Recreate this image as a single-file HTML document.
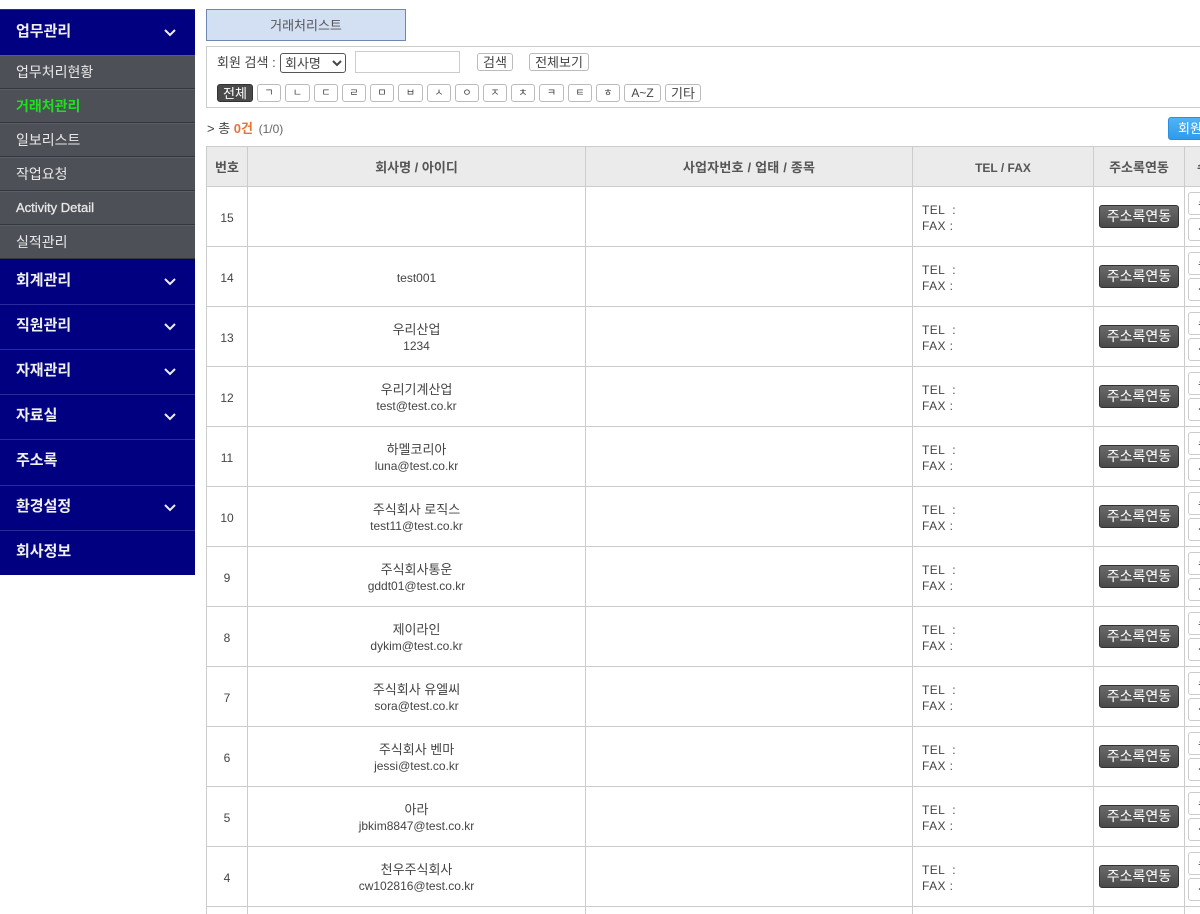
<!DOCTYPE html>
<html lang="ko"><head><meta charset="utf-8"><title>거래처리스트</title>
<style>
*{box-sizing:border-box}
html,body{margin:0;padding:0;width:1200px;height:914px;overflow:hidden;background:#fff}
body{position:relative;font-family:"Liberation Sans","Noto Sans CJK KR",sans-serif;font-size:13px;color:#444}
#side{position:absolute;left:0;top:9px;width:195px;height:566px;background:#000080}
#side div{position:absolute;left:0;width:195px;white-space:nowrap}
.m{color:#f0f0f0;font-size:15px;font-weight:bold;padding-left:16px;border-bottom:1px solid #2a2a9a}
.s{background:#4d5157;color:#e8e8e8;font-size:14px;padding-left:16px;height:34px;line-height:32px;border-bottom:1px solid #33363b;border-top:1px solid #5a5e64}
#side svg{position:absolute;left:163px}
.tab{position:absolute;left:206px;top:9px;width:200px;height:32px;background:#d3dff3;border:1px solid #6f86b0;text-align:center;line-height:31px;color:#555;font-size:13px}
.box{position:absolute;left:206px;top:46px;width:1000px;height:62px;border:1px solid #ccc;border-right:0}
.abs{position:absolute;white-space:nowrap}
.b{position:absolute;top:84px;height:18px;border:1px solid #bbb;border-radius:3px;background:#fff;color:#444;text-align:center;line-height:18px;font-size:13px;white-space:nowrap;overflow:hidden}
.k{font-size:10px}
table{position:absolute;left:206px;top:146px;width:1060px;border-collapse:collapse;table-layout:fixed}
th,td{border:1px solid #ccc;text-align:center;padding:2px 0 0;font-size:12px;line-height:16px;color:#444;overflow:hidden;white-space:nowrap}
th{height:40px;background:#ebebeb;font-weight:bold;color:#555;font-size:13px}
td{height:60px;position:relative}
td i{font-style:normal;font-size:13px}
td.f{text-align:left;padding-left:9px;letter-spacing:.4px}
.g{display:block;width:80px;height:23px;margin:-2px auto 0;line-height:21px;background:linear-gradient(#6a6a6a,#4a4a4a);border:1px solid #333;border-radius:3px;color:#fff;font-size:14px}
.e{position:absolute;left:3px;width:40px;height:23px;border:1px solid #ccc;border-radius:3px;background:#fff;text-align:left;padding-left:9px;line-height:21px;font-size:13px}
.e.a{top:5px}.e.c{top:31px}
</style></head><body>
<div id="side">
<div class="m" style="top:0;height:46px;line-height:44px;border:0;border-top:1px solid #2a2a9a">업무관리</div>
<svg style="top:19px" width="14" height="10" viewBox="0 0 14 10"><path d="M2 2l5 5 5-5" fill="none" stroke="#eee" stroke-width="2"/></svg>
<div class="s" style="top:46px">업무처리현황</div>
<div class="s" style="top:80px;color:#1fe01f;font-weight:bold">거래처관리</div>
<div class="s" style="top:114px">일보리스트</div>
<div class="s" style="top:148px">작업요청</div>
<div class="s" style="top:182px;font-size:13px;line-height:31px;-webkit-text-stroke:.3px #e8e8e8">Activity Detail</div>
<div class="s" style="top:216px">실적관리</div>
<div class="m" style="top:250px;height:46px;line-height:43px">회계관리</div>
<svg style="top:268px" width="14" height="10" viewBox="0 0 14 10"><path d="M2 2l5 5 5-5" fill="none" stroke="#eee" stroke-width="2"/></svg>
<div class="m" style="top:296px;height:45px;line-height:41px">직원관리</div>
<svg style="top:313px" width="14" height="10" viewBox="0 0 14 10"><path d="M2 2l5 5 5-5" fill="none" stroke="#eee" stroke-width="2"/></svg>
<div class="m" style="top:341px;height:45px;line-height:41px">자재관리</div>
<svg style="top:358px" width="14" height="10" viewBox="0 0 14 10"><path d="M2 2l5 5 5-5" fill="none" stroke="#eee" stroke-width="2"/></svg>
<div class="m" style="top:386px;height:45px;line-height:41px">자료실</div>
<svg style="top:403px" width="14" height="10" viewBox="0 0 14 10"><path d="M2 2l5 5 5-5" fill="none" stroke="#eee" stroke-width="2"/></svg>
<div class="m" style="top:431px;height:46px;line-height:42px">주소록</div>
<div class="m" style="top:477px;height:45px;line-height:41px">환경설정</div>
<svg style="top:494px" width="14" height="10" viewBox="0 0 14 10"><path d="M2 2l5 5 5-5" fill="none" stroke="#eee" stroke-width="2"/></svg>
<div class="m" style="top:522px;height:44px;line-height:41px;border:0">회사정보</div>
</div>

<div class="tab">거래처리스트</div>
<div class="box"></div>
<div class="abs" style="left:217px;top:55px;line-height:16px">회원 검색 :</div>
<select style="position:absolute;left:280px;top:53px;width:66px;height:20px;border:1px solid #555;border-radius:3px;background:#fff;font:13px 'Liberation Sans','Noto Sans CJK KR',sans-serif;color:#444;padding:0"><option>회사명</option></select>
<div class="abs" style="left:355px;top:51px;width:105px;height:22px;border:1px solid #ccc"></div>
<div class="b" style="left:477px;top:53px;width:36px">검색</div>
<div class="b" style="left:529px;top:53px;width:60px">전체보기</div>
<div class="b" style="left:217px;width:36px;background:#4a4a4a;color:#fff;border-color:#333">전체</div>
<div class="b k" style="left:257px;width:24px">ㄱ</div>
<div class="b k" style="left:285px;width:25px">ㄴ</div>
<div class="b k" style="left:314px;width:24px">ㄷ</div>
<div class="b k" style="left:342px;width:24px">ㄹ</div>
<div class="b k" style="left:370px;width:24px">ㅁ</div>
<div class="b k" style="left:398px;width:25px">ㅂ</div>
<div class="b k" style="left:427px;width:24px">ㅅ</div>
<div class="b k" style="left:455px;width:24px">ㅇ</div>
<div class="b k" style="left:483px;width:24px">ㅈ</div>
<div class="b k" style="left:511px;width:24px">ㅊ</div>
<div class="b k" style="left:539px;width:25px">ㅋ</div>
<div class="b k" style="left:568px;width:24px">ㅌ</div>
<div class="b k" style="left:596px;width:24px">ㅎ</div>
<div class="b" style="left:624px;width:37px;font-size:12px;line-height:16px">A~Z</div>
<div class="b" style="left:665px;width:36px">기타</div>

<div class="abs" style="left:207px;top:121px;line-height:16px;color:#444">&gt; 총 <b style="color:#e8733a">0건</b> <span style="color:#666;font-size:12px;margin-left:2px">(1/0)</span></div>
<div class="abs" style="left:1168px;top:117px;width:60px;height:23px;background:linear-gradient(#4fb3f6,#2f9bec);border:1px solid #2a8fdd;border-radius:3px;color:#fff;line-height:22px;padding-left:9px">회원등록</div>

<table>
<colgroup><col style="width:41px"><col style="width:338px"><col style="width:327px"><col style="width:181px"><col style="width:91px"><col style="width:82px"></colgroup>
<tr><th>번호</th><th>회사명 / 아이디</th><th style="letter-spacing:.2px">사업자번호 / 업태 / 종목</th><th style="font-size:12px">TEL / FAX</th><th>주소록연동</th><th style="text-align:left;padding-left:12px">수정</th></tr>
<tr><td>15</td><td></td><td></td><td class="f">TEL &nbsp;:<br>FAX :</td><td><span class="g">주소록연동</span></td><td><span class="e a">수정</span><span class="e c">삭제</span></td></tr>
<tr><td>14</td><td>test001</td><td></td><td class="f">TEL &nbsp;:<br>FAX :</td><td><span class="g">주소록연동</span></td><td><span class="e a">수정</span><span class="e c">삭제</span></td></tr>
<tr><td>13</td><td><i>우리산업</i><br>1234</td><td></td><td class="f">TEL &nbsp;:<br>FAX :</td><td><span class="g">주소록연동</span></td><td><span class="e a">수정</span><span class="e c">삭제</span></td></tr>
<tr><td>12</td><td><i>우리기계산업</i><br>test@test.co.kr</td><td></td><td class="f">TEL &nbsp;:<br>FAX :</td><td><span class="g">주소록연동</span></td><td><span class="e a">수정</span><span class="e c">삭제</span></td></tr>
<tr><td>11</td><td><i>하멜코리아</i><br>luna@test.co.kr</td><td></td><td class="f">TEL &nbsp;:<br>FAX :</td><td><span class="g">주소록연동</span></td><td><span class="e a">수정</span><span class="e c">삭제</span></td></tr>
<tr><td>10</td><td><i>주식회사 로직스</i><br>test11@test.co.kr</td><td></td><td class="f">TEL &nbsp;:<br>FAX :</td><td><span class="g">주소록연동</span></td><td><span class="e a">수정</span><span class="e c">삭제</span></td></tr>
<tr><td>9</td><td><i>주식회사통운</i><br>gddt01@test.co.kr</td><td></td><td class="f">TEL &nbsp;:<br>FAX :</td><td><span class="g">주소록연동</span></td><td><span class="e a">수정</span><span class="e c">삭제</span></td></tr>
<tr><td>8</td><td><i>제이라인</i><br>dykim@test.co.kr</td><td></td><td class="f">TEL &nbsp;:<br>FAX :</td><td><span class="g">주소록연동</span></td><td><span class="e a">수정</span><span class="e c">삭제</span></td></tr>
<tr><td>7</td><td><i>주식회사 유엘씨</i><br>sora@test.co.kr</td><td></td><td class="f">TEL &nbsp;:<br>FAX :</td><td><span class="g">주소록연동</span></td><td><span class="e a">수정</span><span class="e c">삭제</span></td></tr>
<tr><td>6</td><td><i>주식회사 벤마</i><br>jessi@test.co.kr</td><td></td><td class="f">TEL &nbsp;:<br>FAX :</td><td><span class="g">주소록연동</span></td><td><span class="e a">수정</span><span class="e c">삭제</span></td></tr>
<tr><td>5</td><td><i>아라</i><br>jbkim8847@test.co.kr</td><td></td><td class="f">TEL &nbsp;:<br>FAX :</td><td><span class="g">주소록연동</span></td><td><span class="e a">수정</span><span class="e c">삭제</span></td></tr>
<tr><td>4</td><td><i>천우주식회사</i><br>cw102816@test.co.kr</td><td></td><td class="f">TEL &nbsp;:<br>FAX :</td><td><span class="g">주소록연동</span></td><td><span class="e a">수정</span><span class="e c">삭제</span></td></tr>
<tr><td></td><td></td><td></td><td></td><td></td><td></td></tr>
</table>
</body></html>
